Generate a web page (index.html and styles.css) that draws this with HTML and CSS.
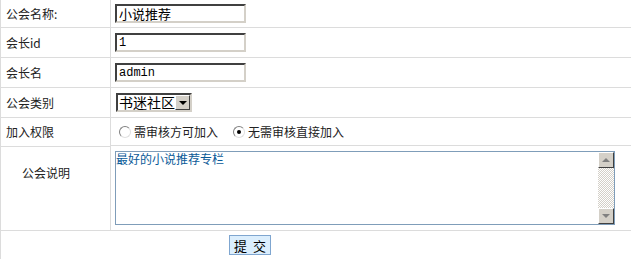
FILE: index.html
```html
<!DOCTYPE html>
<html lang="zh-CN">
<head>
    <meta charset="UTF-8">
    <title>公会信息</title>
    <link rel="stylesheet" href="styles.css">
</head>
<body>
<form class="guild">
    <table class="guild-table">
        <tr class="r1">
            <td class="label">公会名称:</td>
            <td class="field"><input class="text big" type="text" value="小说推荐"></td>
        </tr>
        <tr class="r2">
            <td class="label">会长id</td>
            <td class="field"><input class="text mono" type="text" value="1"></td>
        </tr>
        <tr class="r3">
            <td class="label">会长名</td>
            <td class="field"><input class="text mono" type="text" value="admin"></td>
        </tr>
        <tr class="r4">
            <td class="label">公会类别</td>
            <td class="field">
                <span class="select">
                    <span class="select-text">书迷社区</span>
                    <span class="select-btn"><span class="tri-down"></span></span>
                </span>
            </td>
        </tr>
        <tr class="r5">
            <td class="label">加入权限</td>
            <td class="field radios">
                <label class="opt"><input type="radio" name="join" class="radio">需审核方可加入</label>
                <label class="opt"><input type="radio" name="join" class="radio" checked>无需审核直接加入</label>
            </td>
        </tr>
        <tr class="r6">
            <td class="label desc">公会说明</td>
            <td class="field">
                <div class="memo">
                    <textarea class="memo-text">最好的小说推荐专栏</textarea>
                    <div class="scroll">
                        <span class="sbtn"><span class="tri-up"></span></span>
                        <span class="track"></span>
                        <span class="sbtn"><span class="tri-down gray"></span></span>
                    </div>
                </div>
            </td>
        </tr>
        <tr class="r7">
            <td class="submit-cell" colspan="2"><button type="button" class="submit">提 交</button></td>
        </tr>
    </table>
</form>
</body>
</html>
```

FILE: styles.css
```css
body {
    margin: 0;
    background: #fff;
    font-family: "Noto Sans CJK SC", "Liberation Sans", sans-serif;
    font-size: 12px;
    color: #222;
}

.guild-table {
    width: 631px;
    border-collapse: collapse;
    table-layout: fixed;
}

.guild-table td {
    padding: 0;
    border-bottom: 1px solid #dcdcdc;
    vertical-align: middle;
}

.label {
    width: 104px;
    padding-left: 5px !important;
    border-left: 1px solid #dcdcdc;
    border-right: 1px solid #dcdcdc;
    line-height: 14px;
}

.field {
    padding-left: 4px !important;
}

.r1 td { height: 27px; }
.r2 td { height: 29px; }
.r3 td { height: 29px; }
.r4 td { height: 29px; }
.r5 td { height: 27px; }
.r6 td { height: 83px; }
.r6 td.desc { height: 64px; }
.r7 td { height: 29px; }

.text {
    display: block;
    box-sizing: border-box;
    width: 131px;
    height: 19px;
    margin: 0;
    padding: 0 2px;
    border: 2px solid;
    border-color: #404040 #d4d0c8 #d4d0c8 #404040;
    background: #fff;
    color: #000;
    outline: none;
}

.big {
    font-family: "Noto Sans CJK SC", sans-serif;
    font-size: 13px;
}

.mono {
    font-family: "Liberation Mono", monospace;
    font-size: 12px;
}

.select {
    display: flex;
    box-sizing: border-box;
    width: 76px;
    height: 19px;
    margin-left: 1px;
    border: 2px solid;
    border-color: #404040 #d4d0c8 #d4d0c8 #404040;
    background: #fff;
}

.select-text {
    flex: 1;
    padding-left: 1px;
    font-size: 14px;
    line-height: 15px;
    color: #000;
}

.select-btn {
    display: flex;
    align-items: center;
    justify-content: center;
    width: 13px;
    border: 1px solid;
    border-color: #fff #404040 #404040 #fff;
    background: #d4d0c8;
}

.tri-down {
    width: 0;
    height: 0;
    border-left: 4px solid transparent;
    border-right: 4px solid transparent;
    border-top: 4px solid #000;
}

.tri-up {
    width: 0;
    height: 0;
    border-left: 4px solid transparent;
    border-right: 4px solid transparent;
    border-bottom: 4px solid #808080;
}

.tri-down.gray {
    border-top-color: #808080;
}

.radios {
    display: flex;
    align-items: center;
}

.opt {
    display: flex;
    align-items: center;
    margin-right: 11px;
}

.radio {
    appearance: none;
    box-sizing: border-box;
    width: 12px;
    height: 12px;
    margin: 0 3px 0 4px;
    border-radius: 50%;
    border: 1px solid;
    border-color: #808080 #e0e0e0 #e0e0e0 #808080;
    background: #fff;
    position: relative;
}

.radio:checked::after {
    content: "";
    position: absolute;
    left: 3px;
    top: 3px;
    width: 4px;
    height: 4px;
    border-radius: 50%;
    background: #000;
}

.desc {
    vertical-align: top !important;
    padding-left: 21px !important;
    padding-top: 19px !important;
}

.memo {
    display: flex;
    box-sizing: border-box;
    width: 500px;
    height: 74px;
    border: 1px solid #7f9db9;
    background: #fff;
}

.memo-text {
    flex: 1;
    margin: 0;
    padding: 0;
    border: 0;
    outline: none;
    resize: none;
    overflow: hidden;
    font-family: "Noto Sans CJK SC", sans-serif;
    font-size: 12px;
    line-height: 14px;
    color: #0a5a98;
}

.scroll {
    display: flex;
    flex-direction: column;
    width: 16px;
}

.sbtn {
    display: flex;
    align-items: center;
    justify-content: center;
    box-sizing: border-box;
    height: 16px;
    border: 1px solid;
    border-color: #fff #404040 #404040 #fff;
    background: #d4d0c8;
}

.track {
    flex: 1;
    background: repeating-conic-gradient(#d4d0c8 0 25%, #fff 0 50%) 0 0 / 2px 2px;
}

.submit-cell {
    padding-left: 228px !important;
    border-left: 1px solid #dcdcdc;
}

.submit {
    box-sizing: border-box;
    width: 42px;
    height: 20px;
    margin: 0;
    padding: 0;
    border: 1px solid #7fa6d0;
    background: #dbeefd;
    font-family: "Noto Sans CJK SC", sans-serif;
    font-size: 13px;
    word-spacing: 3px;
    color: #000;
}
```
